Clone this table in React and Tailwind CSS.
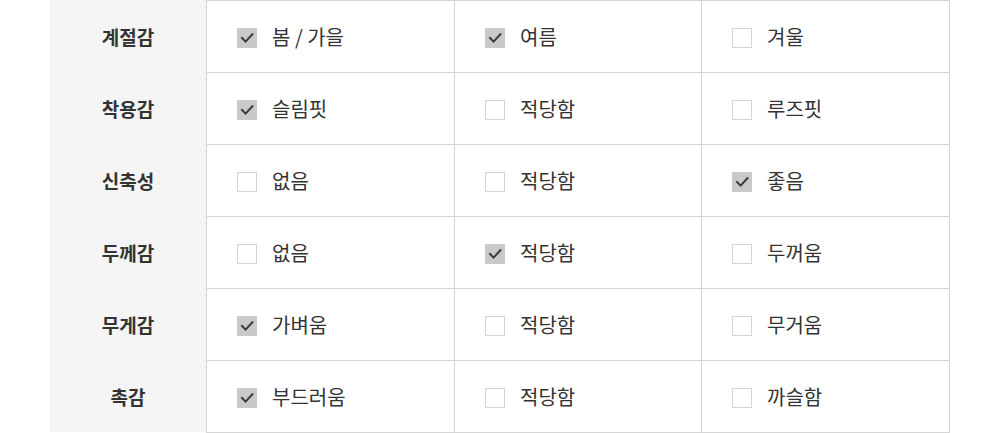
const rows = [
  { label: '계절감', options: [['봄 / 가을', true], ['여름', true], ['겨울', false]] },
  { label: '착용감', options: [['슬림핏', true], ['적당함', false], ['루즈핏', false]] },
  { label: '신축성', options: [['없음', false], ['적당함', false], ['좋음', true]] },
  { label: '두께감', options: [['없음', false], ['적당함', true], ['두꺼움', false]] },
  { label: '무게감', options: [['가벼움', true], ['적당함', false], ['무거움', false]] },
  { label: '촉감', options: [['부드러움', true], ['적당함', false], ['까슬함', false]] },
];

function Box({ checked }) {
  if (!checked) {
    return <span className="block w-5 h-5 border border-[#d4d4d4] bg-white shrink-0" />;
  }
  return (
    <span className="flex items-center justify-center w-5 h-5 bg-[#c9c9c9] shrink-0">
      <svg width="16" height="14" viewBox="0 0 16 14" fill="none">
        <path d="M3 7 L6.6 10.6 L13.4 3.2" stroke="#3c3c3c" strokeWidth="2" strokeLinecap="square" />
      </svg>
    </span>
  );
}

export default function App() {
  return (
    <div className="w-[1000px] h-[433px] bg-white overflow-hidden font-['Noto_Sans_CJK_KR','Noto_Sans',sans-serif] text-[#333]">
      <div className="ml-[50px] w-[900px] flex flex-col">
        {rows.map((row, i) => (
          <div key={row.label} className="flex h-[72px]">
            <div className="w-[156px] bg-[#f4f4f4] flex items-center justify-center text-[19px] leading-none font-bold text-[#333]">
              {row.label}
            </div>
            {row.options.map(([text, checked], j) => (
              <div
                key={j}
                className={`flex items-center gap-[15px] pl-[30px] pt-[3px] border-l border-t border-[#d5d5d5] ${
                  j === 0 ? 'w-[248px]' : j === 1 ? 'w-[247px]' : 'w-[249px] border-r'
                } ${i === rows.length - 1 ? 'h-[73px] border-b' : 'h-[72px]'}`}
              >
                <Box checked={checked} />
                <span className="text-[20px] leading-none -mt-[3px] text-[#333]">{text}</span>
              </div>
            ))}
          </div>
        ))}
      </div>
    </div>
  );
}
